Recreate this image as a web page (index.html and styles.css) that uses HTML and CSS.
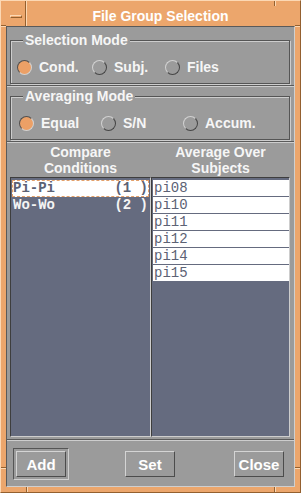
FILE: index.html
```html
<!DOCTYPE html>
<html lang="en">
<head>
    <meta charset="UTF-8">
    <title>File Group Selection</title>
    <link rel="stylesheet" href="styles.css">
</head>
<body>

    <div class="window">
        <div class="titlebar">
            <div class="menu-btn"><span class="menu-bar"></span></div>
            <div class="title">File Group Selection</div>
        </div>

        <div class="panel">
            <fieldset class="group">
                <legend>Selection Mode</legend>
                <div class="options sel">
                    <label class="option"><span class="radio on"></span>Cond.</label>
                    <label class="option"><span class="radio"></span>Subj.</label>
                    <label class="option"><span class="radio"></span>Files</label>
                </div>
            </fieldset>
            <div class="sep"></div>

            <fieldset class="group">
                <legend>Averaging Mode</legend>
                <div class="options avg">
                    <label class="option"><span class="radio on"></span>Equal</label>
                    <label class="option"><span class="radio"></span>S/N</label>
                    <label class="option"><span class="radio"></span>Accum.</label>
                </div>
            </fieldset>
            <div class="sep"></div>

            <div class="list-heads">
                <div>Compare<br>Conditions</div>
                <div>Average Over<br>Subjects</div>
            </div>

            <div class="lists">
                <div class="list cond">
                    <div class="row selected"><span>Pi-Pi</span><span>(1 )</span></div>
                    <div class="row"><span>Wo-Wo</span><span>(2 )</span></div>
                </div>
                <div class="list subj">
                    <div class="item">pi08</div>
                    <div class="item">pi10</div>
                    <div class="item">pi11</div>
                    <div class="item">pi12</div>
                    <div class="item">pi14</div>
                    <div class="item">pi15</div>
                </div>
            </div>
            <div class="sep bottom"></div>

            <div class="buttons">
                <div class="btn-frame default"><button>Add</button></div>
                <div class="btn-frame"><button>Set</button></div>
                <div class="btn-frame"><button>Close</button></div>
            </div>
        </div>
    </div>

</body>
</html>
```

FILE: styles.css
```css
body {
    margin: 0;
    background: #9b9b9b;
    font-family: 'Liberation Sans', Arial, sans-serif;
}

/* orange window frame with the little resize notches */
.window {
    box-sizing: border-box;
    width: 301px;
    height: 493px;
    display: flex;
    flex-direction: column;
    padding: 5px 5px 5px 5px;
    border: 1px solid;
    border-color: #fcd8b4 #94602f #94602f #fcd8b4;
    background:
        linear-gradient(to right, #94602f 50%, #fcd8b4 50%) 25px 0 / 2px 6px no-repeat,
        linear-gradient(to right, #94602f 50%, #fcd8b4 50%) 274px 0 / 2px 6px no-repeat,
        linear-gradient(to right, #94602f 50%, #fcd8b4 50%) 26px 487px / 2px 6px no-repeat,
        linear-gradient(to right, #94602f 50%, #fcd8b4 50%) 274px 487px / 2px 6px no-repeat,
        linear-gradient(#94602f 50%, #fcd8b4 50%) 0 25px / 6px 2px no-repeat,
        linear-gradient(#94602f 50%, #fcd8b4 50%) 295px 25px / 6px 2px no-repeat,
        linear-gradient(#94602f 50%, #fcd8b4 50%) 0 467px / 6px 2px no-repeat,
        linear-gradient(#94602f 50%, #fcd8b4 50%) 295px 467px / 6px 2px no-repeat,
        #eca66c;
    background-origin: border-box;
}

.titlebar {
    display: flex;
    height: 20px;
}

.menu-btn {
    width: 19px;
    border-right: 1px solid #94602f;
    box-shadow: 1px 0 0 #fcd8b4;
    display: flex;
    justify-content: center;
    align-items: center;
}

.menu-bar {
    width: 10px;
    height: 1px;
    border: 1px solid;
    border-color: #fcd8b4 #94602f #94602f #fcd8b4;
}

.title {
    flex: 1;
    text-align: center;
    line-height: 20px;
    font-size: 14px;
    font-weight: bold;
    color: #ffffff;
}

/* grey dialog body */
.panel {
    flex: 1;
    display: flex;
    flex-direction: column;
    background: #9b9b9b;
    border: 1px solid;
    border-color: #5a5a5a #cfcfcf #cfcfcf #5a5a5a;
    color: #f6f6f6;
    font-size: 14px;
    font-weight: bold;
}

.group {
    margin: 5px 4px 0 3px;
    padding: 11px 6px 8px 6px;
    border: 1px solid #555555;
    box-shadow: inset 1px 1px 0 #cdcdcd, 1px 1px 0 #cdcdcd;
}

.group legend {
    margin-left: 6px;
    padding: 0 2px;
    line-height: 16px;
    background: #9b9b9b;
}

.group + .sep {
    margin-top: 1px;
}

.sep + .group {
    margin-top: 1px;
}

.sep {
    height: 0;
    border-top: 1px solid #5a5a5a;
    border-bottom: 1px solid #cdcdcd;
}

.options {
    display: grid;
    align-items: center;
    height: 16px;
}

.options.sel {
    grid-template-columns: 75px 73px auto;
}

.options.avg {
    padding-left: 2px;
    grid-template-columns: 82px 82px auto;
}

.option {
    display: flex;
    align-items: center;
    line-height: 16px;
}

.radio {
    box-sizing: border-box;
    width: 15px;
    height: 15px;
    margin-right: 7px;
    border-radius: 50%;
    border: 1px solid;
    border-color: #d2d2d2 #454545 #454545 #d2d2d2;
}

.radio.on {
    background: #eca066;
    border-color: #505050 #d2d2d2 #d2d2d2 #505050;
}

.list-heads {
    display: grid;
    grid-template-columns: 141px 1fr;
    margin: 1px 4px 0 3px;
    line-height: 16px;
    text-align: center;
}

.lists {
    flex: 1;
    display: grid;
    grid-template-columns: 141px 1fr;
    margin: 1px 4px 0 3px;
}

.list {
    background: #656b7f;
    border: 1px solid;
    border-color: #3e3e3e #cdcdcd #cdcdcd #3e3e3e;
    padding: 2px 1px;
    font-family: 'Liberation Mono', 'Courier New', monospace;
    font-size: 14px;
}

.row {
    display: flex;
    justify-content: space-between;
    height: 17px;
    line-height: 17px;
    padding: 0 1px;
    color: #f4f4f4;
}

.row.selected {
    height: 15px;
    line-height: 15px;
    padding: 0;
    background: #ffffff;
    color: #5c6275;
    border: 1px dashed #e3a06a;
}

.subj {
    padding: 2px 0 2px 1px;
}

.item {
    height: 16px;
    line-height: 16px;
    margin-bottom: 1px;
    padding-left: 1px;
    background: #ffffff;
    color: #5c6275;
    font-weight: normal;
}

.sep.bottom {
    margin-top: 2px;
}

.buttons {
    display: flex;
    justify-content: space-between;
    padding: 7px 7px 6px 6px;
}

.btn-frame {
    padding: 2px;
    border: 1px solid transparent;
}

.btn-frame.default {
    border-color: #555555 #d0d0d0 #d0d0d0 #555555;
}

button {
    box-sizing: border-box;
    width: 50px;
    height: 26px;
    padding: 0;
    background: #9b9b9b;
    border: 1px solid;
    border-color: #d4d4d4 #4c4c4c #4c4c4c #d4d4d4;
    color: #ffffff;
    font-family: 'Liberation Sans', Arial, sans-serif;
    font-size: 15px;
    font-weight: bold;
}
```
